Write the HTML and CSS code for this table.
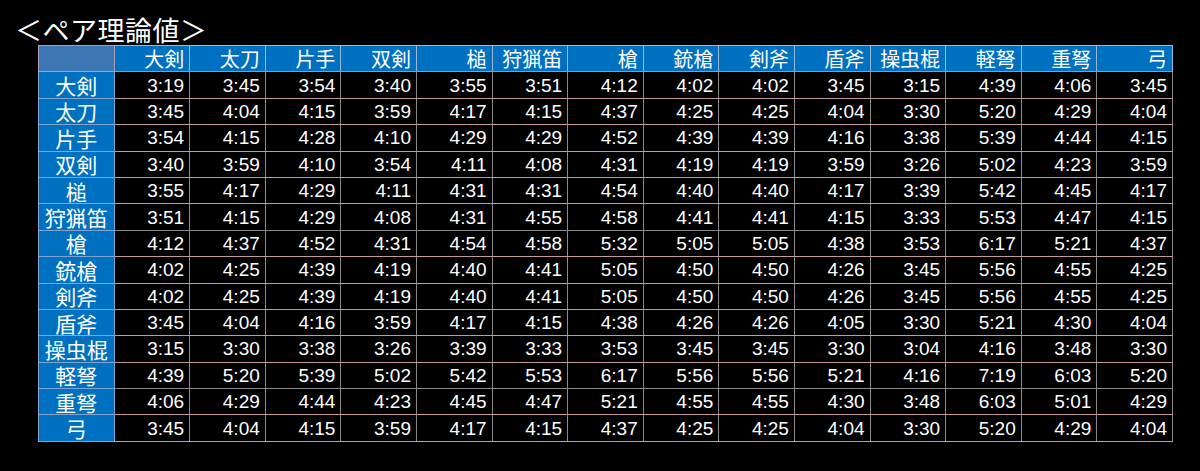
FILE: index.html
```html
<!DOCTYPE html>
<html lang="ja">
<head>
<meta charset="utf-8">
<title>ペア理論値</title>
<link rel="stylesheet" href="styles.css">
</head>
<body>
<h1 class="title">＜ペア理論値＞</h1>
<table class="grid">
<thead>
<tr><th class="corner"></th><th>大剣</th><th>太刀</th><th>片手</th><th>双剣</th><th>槌</th><th>狩猟笛</th><th>槍</th><th>銃槍</th><th>剣斧</th><th>盾斧</th><th>操虫棍</th><th>軽弩</th><th>重弩</th><th>弓</th></tr>
</thead>
<tbody>
<tr><th>大剣</th><td>3:19</td><td>3:45</td><td>3:54</td><td>3:40</td><td>3:55</td><td>3:51</td><td>4:12</td><td>4:02</td><td>4:02</td><td>3:45</td><td>3:15</td><td>4:39</td><td>4:06</td><td>3:45</td></tr>
<tr><th>太刀</th><td>3:45</td><td>4:04</td><td>4:15</td><td>3:59</td><td>4:17</td><td>4:15</td><td>4:37</td><td>4:25</td><td>4:25</td><td>4:04</td><td>3:30</td><td>5:20</td><td>4:29</td><td>4:04</td></tr>
<tr><th>片手</th><td>3:54</td><td>4:15</td><td>4:28</td><td>4:10</td><td>4:29</td><td>4:29</td><td>4:52</td><td>4:39</td><td>4:39</td><td>4:16</td><td>3:38</td><td>5:39</td><td>4:44</td><td>4:15</td></tr>
<tr><th>双剣</th><td>3:40</td><td>3:59</td><td>4:10</td><td>3:54</td><td>4:11</td><td>4:08</td><td>4:31</td><td>4:19</td><td>4:19</td><td>3:59</td><td>3:26</td><td>5:02</td><td>4:23</td><td>3:59</td></tr>
<tr><th>槌</th><td>3:55</td><td>4:17</td><td>4:29</td><td>4:11</td><td>4:31</td><td>4:31</td><td>4:54</td><td>4:40</td><td>4:40</td><td>4:17</td><td>3:39</td><td>5:42</td><td>4:45</td><td>4:17</td></tr>
<tr class="sep"><th>狩猟笛</th><td>3:51</td><td>4:15</td><td>4:29</td><td>4:08</td><td>4:31</td><td>4:55</td><td>4:58</td><td>4:41</td><td>4:41</td><td>4:15</td><td>3:33</td><td>5:53</td><td>4:47</td><td>4:15</td></tr>
<tr><th>槍</th><td>4:12</td><td>4:37</td><td>4:52</td><td>4:31</td><td>4:54</td><td>4:58</td><td>5:32</td><td>5:05</td><td>5:05</td><td>4:38</td><td>3:53</td><td>6:17</td><td>5:21</td><td>4:37</td></tr>
<tr><th>銃槍</th><td>4:02</td><td>4:25</td><td>4:39</td><td>4:19</td><td>4:40</td><td>4:41</td><td>5:05</td><td>4:50</td><td>4:50</td><td>4:26</td><td>3:45</td><td>5:56</td><td>4:55</td><td>4:25</td></tr>
<tr><th>剣斧</th><td>4:02</td><td>4:25</td><td>4:39</td><td>4:19</td><td>4:40</td><td>4:41</td><td>5:05</td><td>4:50</td><td>4:50</td><td>4:26</td><td>3:45</td><td>5:56</td><td>4:55</td><td>4:25</td></tr>
<tr><th>盾斧</th><td>3:45</td><td>4:04</td><td>4:16</td><td>3:59</td><td>4:17</td><td>4:15</td><td>4:38</td><td>4:26</td><td>4:26</td><td>4:05</td><td>3:30</td><td>5:21</td><td>4:30</td><td>4:04</td></tr>
<tr><th>操虫棍</th><td>3:15</td><td>3:30</td><td>3:38</td><td>3:26</td><td>3:39</td><td>3:33</td><td>3:53</td><td>3:45</td><td>3:45</td><td>3:30</td><td>3:04</td><td>4:16</td><td>3:48</td><td>3:30</td></tr>
<tr class="sep"><th>軽弩</th><td>4:39</td><td>5:20</td><td>5:39</td><td>5:02</td><td>5:42</td><td>5:53</td><td>6:17</td><td>5:56</td><td>5:56</td><td>5:21</td><td>4:16</td><td>7:19</td><td>6:03</td><td>5:20</td></tr>
<tr><th>重弩</th><td>4:06</td><td>4:29</td><td>4:44</td><td>4:23</td><td>4:45</td><td>4:47</td><td>5:21</td><td>4:55</td><td>4:55</td><td>4:30</td><td>3:48</td><td>6:03</td><td>5:01</td><td>4:29</td></tr>
<tr><th>弓</th><td>3:45</td><td>4:04</td><td>4:15</td><td>3:59</td><td>4:17</td><td>4:15</td><td>4:37</td><td>4:25</td><td>4:25</td><td>4:04</td><td>3:30</td><td>5:20</td><td>4:29</td><td>4:04</td></tr>
</tbody>
</table>
</body>
</html>
```

FILE: styles.css
```css
html, body {
  margin: 0;
  padding: 0;
  background: #000;
}
body {
  width: 1200px;
  height: 471px;
  overflow: hidden;
  color: #fff;
  font-family: "Liberation Sans", "Noto Sans CJK JP", sans-serif;
}
.title {
  margin: 0;
  padding: 15px 0 0 15px;
  height: 45px;
  box-sizing: border-box;
  font-family: "Noto Sans CJK JP", sans-serif;
  font-weight: normal;
  font-size: 27px;
  line-height: 30px;
  letter-spacing: 0.5px;
  color: #fff;
}
.grid {
  margin: 0 0 0 38px;
  border-collapse: collapse;
  table-layout: fixed;
  width: 1135px;
}
.grid th, .grid td {
  height: 25.4px;
  padding: 0 5px 0 0;
  font-size: 19px;
  line-height: 25px;
  font-weight: normal;
  white-space: nowrap;
  border: 1px solid #8a8a8a;
  border-bottom-color: #c49a9a;
}
.grid thead th {
  background: #0070c0;
  text-align: right;
  font-family: "Noto Sans CJK JP", sans-serif;
  font-size: 20px;
  line-height: 24px;
  border-color: #9ab7d6;
  border-bottom-color: #7f9fbf;
}
.grid thead th.corner {
  background: #3d76b4;
  border-color: #a8a0b8;
}
.grid tbody th {
  background: #0070c0;
  text-align: center;
  padding: 0;
  font-family: "Noto Sans CJK JP", sans-serif;
  font-size: 21px;
  line-height: 24px;
  border-color: #7fa6d0;
}
.grid td {
  text-align: right;
  background: #000;
}
.grid tr.sep td {
  border-bottom-color: #8a8a8a;
}
```
